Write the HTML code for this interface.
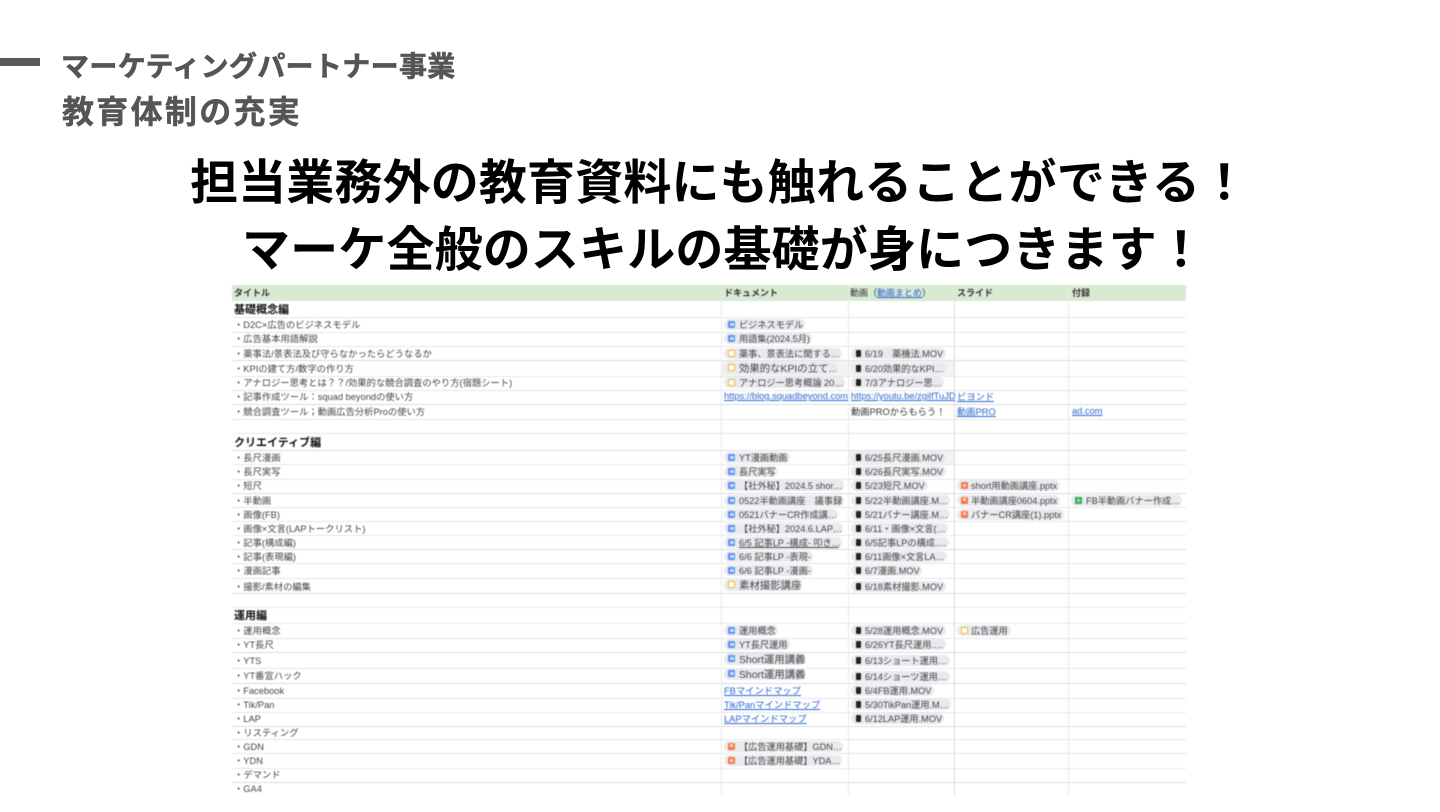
<!DOCTYPE html>
<html lang="ja">
<head>
<meta charset="utf-8">
<title>教育体制の充実</title>
<style>
html,body{margin:0;padding:0;background:#fff;width:1440px;height:812px;overflow:hidden}
body{font-family:"Liberation Sans","Noto Sans CJK JP",sans-serif;position:relative}
.abs{position:absolute;white-space:nowrap}
.dash{left:0;top:58px;width:40px;height:8px;background:#595959}
.s1{left:61px;top:48px;font-size:28px;line-height:38px;font-weight:700;color:#555;letter-spacing:.35px;-webkit-text-stroke:.6px #555}
.s2{left:62px;top:92px;font-size:32px;line-height:40px;font-weight:700;color:#555;letter-spacing:2.3px;-webkit-text-stroke:.4px #555}
.h{font-size:48px;line-height:64px;font-weight:700;color:#000;letter-spacing:.15px}
#tb{position:absolute;left:0;top:0;width:1440px;height:812px;filter:blur(.4px)}
.hb{position:absolute;left:232px;top:285px;width:954px;height:16px;background:#d9ead3}
.hl{position:absolute;left:232px;width:954px;height:1px;background:#e6e6e6}
.hl.k{background:#dcdcdc}
.vl{position:absolute;top:285px;width:1px;height:510px;background:#e9e9e9}
.r{position:absolute;left:232px;width:954px;display:block}
.t,.n,.c,.l,.p{position:absolute;top:0;bottom:0;display:flex;align-items:center;white-space:nowrap}
.t{left:2px;top:-1px;bottom:1px;font-size:9.3px;color:#444}
.n{left:2px;font-size:11px;font-weight:700;color:#111}
.th{font-size:9px;font-weight:700;color:#333}
.c{margin:auto 0;height:11px;top:0;bottom:1px;background:#e8eaee;border-radius:6px;font-size:9.2px;color:#444;overflow:hidden}
.c b{font-weight:400;margin-left:15px;position:relative;top:-.5px}
.b b,.s b{margin-left:14px}
.c i{position:absolute;left:4px;top:2px;width:7px;height:7px;border-radius:1px;box-sizing:border-box}
.c i.d{background:#5b93ee}
.c i.d:after{content:"";position:absolute;left:1.5px;top:2px;width:4px;height:3px;background:#c9dcfa}
.c i.y{background:#fff;border:1.5px solid #f5b922}
.c i.o{background:#f3794a}
.c i.o:after{content:"";position:absolute;left:2px;top:1.5px;width:3px;height:3px;background:#fbd4c4}
.c i.g{background:#35a853}
.c i.g:after{content:"";position:absolute;left:1px;top:1px;width:5px;height:5px;background:linear-gradient(#b7e0c3,#b7e0c3) 0 50%/100% 1px no-repeat,linear-gradient(#b7e0c3,#b7e0c3) 50% 0/1px 100% no-repeat}
.c i.f{left:5px;width:5px;background:#222}
.big{font-size:10.4px;height:12px}
.a{left:492px}.b{left:619px}.s{left:725px}.e{left:839px}
.l{top:-1px;bottom:1px;font-size:9.3px;color:#2a66d0;text-decoration:underline;overflow:hidden}
.p{top:-1px;bottom:1px;font-size:9.3px;color:#333}
.sh{position:absolute;top:0;bottom:0;background:#f3f3f3}
</style>
</head>
<body>
<div class="abs dash"></div>
<div class="abs s1">マーケティングパートナー事業</div>
<div class="abs s2">教育体制の充実</div>
<div class="abs h" style="left:190px;top:152px">担当業務外の教育資料にも触れることができる！</div>
<div class="abs h" style="left:242px;top:219px">マーケ全般のスキルの基礎が身につきます！</div>

<div id="tb">
<div class="hb"></div>
<div class="hl" style="top:317px"></div><div class="hl" style="top:332px"></div><div class="hl" style="top:346px"></div><div class="hl k" style="top:360px"></div><div class="hl" style="top:376px"></div><div class="hl" style="top:390px"></div><div class="hl k" style="top:404px"></div><div class="hl" style="top:419px"></div><div class="hl" style="top:433px"></div><div class="hl k" style="top:450px"></div><div class="hl" style="top:464px"></div><div class="hl" style="top:479px"></div><div class="hl k" style="top:493px"></div><div class="hl" style="top:507px"></div><div class="hl" style="top:521px"></div><div class="hl" style="top:535px"></div><div class="hl k" style="top:549px"></div><div class="hl" style="top:563px"></div><div class="hl" style="top:578px"></div><div class="hl k" style="top:593px"></div><div class="hl" style="top:607px"></div><div class="hl" style="top:623px"></div><div class="hl" style="top:638px"></div><div class="hl k" style="top:652px"></div><div class="hl" style="top:668px"></div><div class="hl k" style="top:683px"></div><div class="hl" style="top:698px"></div><div class="hl" style="top:712px"></div><div class="hl k" style="top:726px"></div><div class="hl" style="top:739px"></div><div class="hl" style="top:753px"></div><div class="hl" style="top:768px"></div><div class="hl k" style="top:782px"></div>
<div class="vl" style="left:721px"></div><div class="vl" style="left:848px"></div><div class="vl" style="left:954px;background:#dedede"></div><div class="vl" style="left:1068px"></div>

<div class="r" style="top:285px;height:16px">
<div class="t th">タイトル</div>
<div class="t th" style="left:492px">ドキュメント</div>
<div class="t th" style="left:618px;font-weight:400;color:#333">動画（<span style="color:#2a66d0;text-decoration:underline">動画まとめ</span>）</div>
<div class="t th" style="left:725px">スライド</div>
<div class="t th" style="left:840px">付録</div>
</div>

<div class="r" style="top:301px;height:16px"><div class="n">基礎概念編</div></div>

<div class="r" style="top:318px;height:14px"><div class="t">・D2C×広告のビジネスモデル</div><div class="c a" style="width:81px"><i class="d"></i><b>ビジネスモデル</b></div></div>
<div class="r" style="top:332px;height:14px"><div class="t">・広告基本用語解説</div><div class="c a" style="width:88px"><i class="d"></i><b>用語集(2024.5月)</b></div></div>
<div class="r" style="top:347px;height:13px"><div class="t">・薬事法/景表法及び守らなかったらどうなるか</div><div class="c a" style="width:118px"><i class="y"></i><b>薬事、景表法に関する…</b></div><div class="c b" style="width:95px"><i class="f"></i><b>6/19　薬機法.MOV</b></div></div>
<div class="r" style="top:361px;height:15px"><div class="sh" style="left:490px;width:126px"></div><div class="sh" style="left:617px;width:105px"></div><div class="t">・KPIの建て方/数字の作り方</div><div class="c a big" style="width:114px"><i class="y"></i><b>効果的なKPIの立て…</b></div><div class="c b" style="width:95px"><i class="f"></i><b>6/20効果的なKPI…</b></div></div>
<div class="r" style="top:376px;height:14px"><div class="t">・アナロジー思考とは？？/効果的な競合調査のやり方(宿題シート)</div><div class="c a" style="width:121px"><i class="y"></i><b>アナロジー思考概論 20…</b></div><div class="c b" style="width:93px"><i class="f"></i><b>7/3アナロジー思…</b></div></div>
<div class="r" style="top:390px;height:14px"><div class="t">・記事作成ツール：squad beyondの使い方</div><div class="l" style="left:492px;width:124px">https://blog.squadbeyond.com/</div><div class="l" style="left:619px;width:104px">https://youtu.be/zgilfTuJDZ</div><div class="l" style="left:725px">ビヨンド</div></div>
<div class="r" style="top:405px;height:14px"><div class="t">・競合調査ツール；動画広告分析Proの使い方</div><div class="p" style="left:619px">動画PROからもらう！</div><div class="l" style="left:725px">動画PRO</div><div class="l" style="left:840px">ad.com</div></div>

<div class="r" style="top:433px;height:17px"><div class="n">クリエイティブ編</div></div>

<div class="r" style="top:451px;height:13px"><div class="sh" style="left:617px;width:105px"></div><div class="t">・長尺漫画</div><div class="c a" style="width:66px"><i class="d"></i><b>YT漫画動画</b></div><div class="c b" style="width:95px"><i class="f"></i><b>6/25長尺漫画.MOV</b></div></div>
<div class="r" style="top:465px;height:14px"><div class="t">・長尺実写</div><div class="c a" style="width:54px"><i class="d"></i><b>長尺実写</b></div><div class="c b" style="width:95px"><i class="f"></i><b>6/26長尺実写.MOV</b></div></div>
<div class="r" style="top:479px;height:14px"><div class="t">・短尺</div><div class="c a" style="width:120px"><i class="d"></i><b>【社外秘】2024.5 shor…</b></div><div class="c b" style="width:77px"><i class="f"></i><b>5/23短尺.MOV</b></div><div class="c s" style="width:103px"><i class="o"></i><b>short用動画講座.pptx</b></div></div>
<div class="r" style="top:494px;height:13px"><div class="t">・半動画</div><div class="c a" style="width:120px"><i class="d"></i><b>0522半動画講座　議事録</b></div><div class="c b" style="width:99px"><i class="f"></i><b>5/22半動画講座.M…</b></div><div class="c s" style="width:103px"><i class="o"></i><b>半動画講座0604.pptx</b></div><div class="c e" style="width:111px"><i class="g"></i><b>FB半動画バナー作成…</b></div></div>
<div class="r" style="top:508px;height:13px"><div class="t">・画像(FB)</div><div class="c a" style="width:114px"><i class="d"></i><b>0521バナーCR作成講…</b></div><div class="c b" style="width:99px"><i class="f"></i><b>5/21バナー講座.M…</b></div><div class="c s" style="width:107px"><i class="o"></i><b>バナーCR講座(1).pptx</b></div></div>
<div class="r" style="top:522px;height:13px"><div class="t">・画像×文言(LAPトークリスト)</div><div class="c a" style="width:119px"><i class="d"></i><b>【社外秘】2024.6.LAP…</b></div><div class="c b" style="width:97px"><i class="f"></i><b>6/11・画像×文言(…</b></div></div>
<div class="r" style="top:536px;height:13px"><div class="t">・記事(構成編)</div><div class="c a" style="width:118px"><i class="d"></i><b style="text-decoration:underline">6/5 記事LP -構成- 叩き…</b></div><div class="c b" style="width:98px"><i class="f"></i><b>6/5記事LPの構成.…</b></div></div>
<div class="r" style="top:550px;height:13px"><div class="t">・記事(表現編)</div><div class="c a" style="width:89px"><i class="d"></i><b>6/6 記事LP -表現-</b></div><div class="c b" style="width:96px"><i class="f"></i><b>6/11画像×文言LA…</b></div></div>
<div class="r" style="top:564px;height:14px"><div class="t">・漫画記事</div><div class="c a" style="width:89px"><i class="d"></i><b>6/6 記事LP -漫画-</b></div><div class="c b" style="width:71px"><i class="f"></i><b>6/7漫画.MOV</b></div></div>
<div class="r" style="top:578px;height:15px"><div class="t" style="top:1px;bottom:0">・撮影/素材の編集</div><div class="c a big" style="width:78px;top:0;bottom:1px"><i class="y"></i><b>素材撮影講座</b></div><div class="c b" style="width:95px;top:1px;bottom:0"><i class="f"></i><b>6/18素材撮影.MOV</b></div></div>

<div class="r" style="top:607px;height:16px"><div class="n">運用編</div></div>

<div class="r" style="top:624px;height:14px"><div class="t">・運用概念</div><div class="c a" style="width:54px"><i class="d"></i><b>運用概念</b></div><div class="c b" style="width:95px"><i class="f"></i><b>5/28運用概念.MOV</b></div><div class="c s" style="width:54px"><i class="y"></i><b>広告運用</b></div></div>
<div class="r" style="top:638px;height:14px"><div class="t">・YT長尺</div><div class="c a" style="width:66px"><i class="d"></i><b>YT長尺運用</b></div><div class="c b" style="width:95px"><i class="f"></i><b>6/26YT長尺運用.…</b></div></div>
<div class="r" style="top:653px;height:15px"><div class="t">・YTS</div><div class="c a big" style="width:82px;top:-2px;bottom:2px"><i class="d"></i><b>Short運用講義</b></div><div class="c b" style="width:99px;top:0;bottom:1px"><i class="f"></i><b>6/13ショート運用…</b></div></div>
<div class="r" style="top:668px;height:15px"><div class="t" style="top:0;bottom:1px">・YT番宣ハック</div><div class="c a big" style="width:82px;top:-2px;bottom:2px"><i class="d"></i><b>Short運用講義</b></div><div class="c b" style="width:99px;top:1px;bottom:0"><i class="f"></i><b>6/14ショーツ運用…</b></div></div>
<div class="r" style="top:684px;height:14px"><div class="t">・Facebook</div><div class="l" style="left:492px">FBマインドマップ</div><div class="c b" style="width:83px"><i class="f"></i><b>6/4FB運用.MOV</b></div></div>
<div class="r" style="top:698px;height:14px"><div class="t">・Tik/Pan</div><div class="l" style="left:492px">Tik/Panマインドマップ</div><div class="c b" style="width:100px"><i class="f"></i><b>5/30TikPan運用.M…</b></div></div>
<div class="r" style="top:712px;height:14px"><div class="t">・LAP</div><div class="l" style="left:492px">LAPマインドマップ</div><div class="c b" style="width:93px"><i class="f"></i><b>6/12LAP運用.MOV</b></div></div>
<div class="r" style="top:727px;height:12px"><div class="t">・リスティング</div></div>
<div class="r" style="top:740px;height:13px"><div class="t">・GDN</div><div class="c a" style="width:119px"><i class="o"></i><b>【広告運用基礎】GDN…</b></div></div>
<div class="r" style="top:754px;height:14px"><div class="t">・YDN</div><div class="c a" style="width:118px"><i class="o"></i><b>【広告運用基礎】YDA…</b></div></div>
<div class="r" style="top:768px;height:14px"><div class="t">・デマンド</div></div>
<div class="r" style="top:783px;height:12px"><div class="t">・GA4</div></div>
</div>
</body>
</html>
